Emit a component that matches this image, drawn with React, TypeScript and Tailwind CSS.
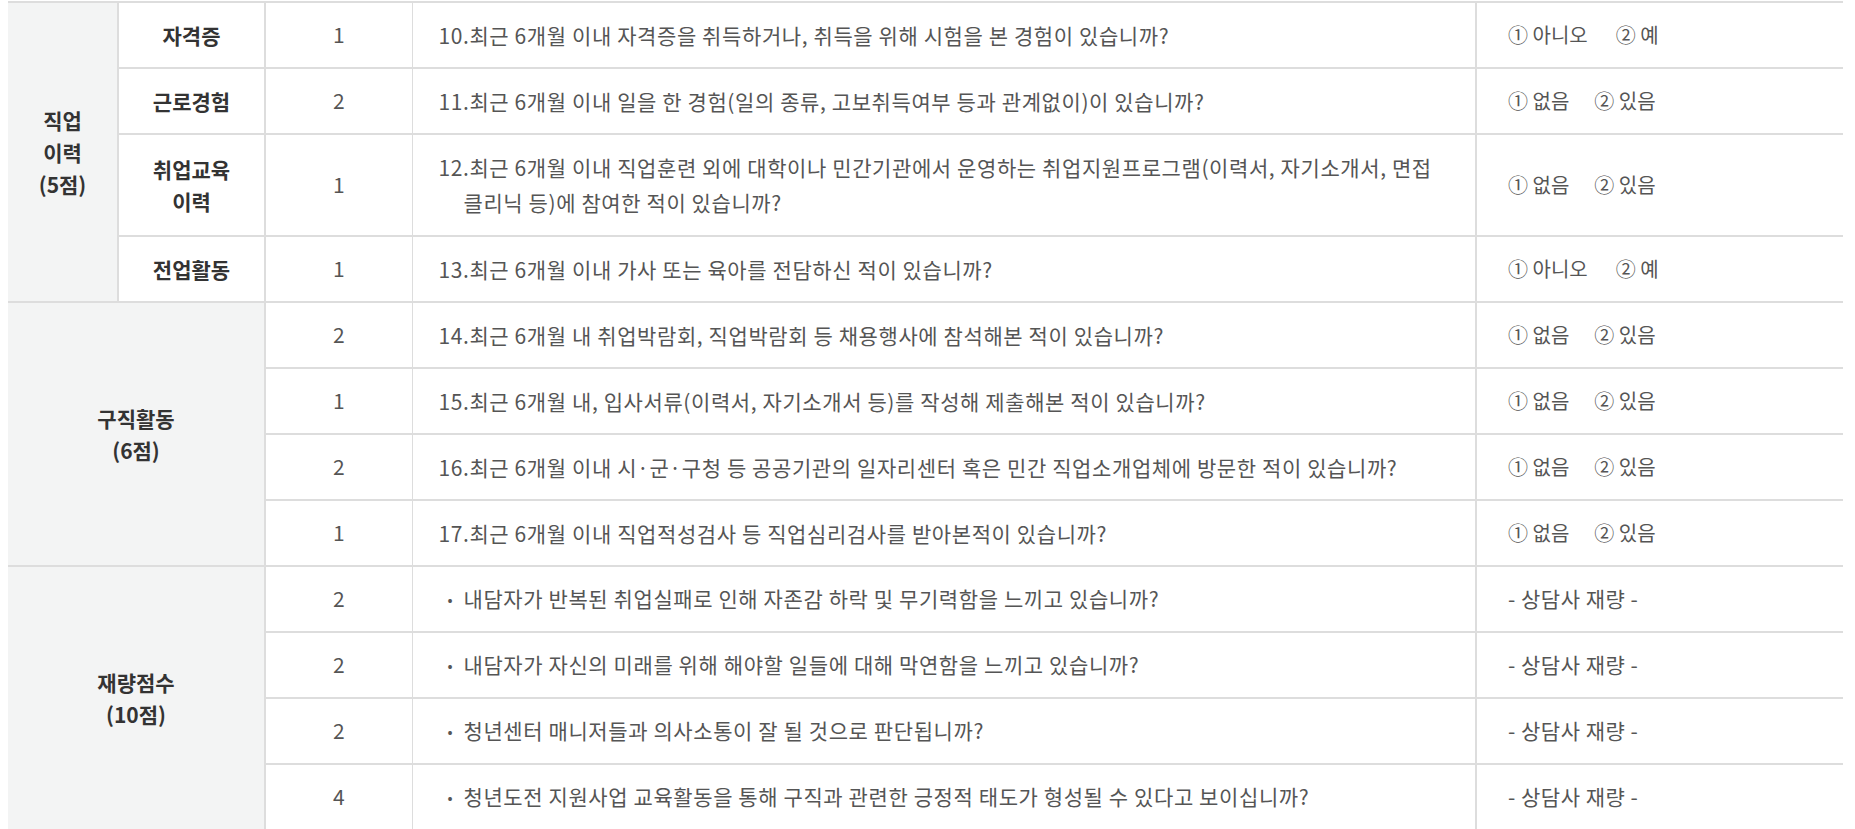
import React from "react";

type Row = {
  score: number;
  text: React.ReactNode;
  answer: "yn" | "has" | "judge";
  bullet?: boolean;
  tall?: boolean;
};

const font = { fontFamily: '"Noto Sans CJK KR", "Noto Sans", sans-serif' };

function Answer({ kind }: { kind: Row["answer"] }) {
  if (kind === "judge") {
    return <span className="text-[21px] tracking-[0.5px]">- 상담사 재량 -</span>;
  }
  return (
    <div className={`flex text-[20px] ${kind === "yn" ? "gap-[28px]" : "gap-[25px]"}`}>
      <span>① {kind === "yn" ? "아니오" : "없음"}</span>
      <span>② {kind === "yn" ? "예" : "있음"}</span>
    </div>
  );
}

function Question({ row }: { row: Row }) {
  if (row.bullet) {
    return (
      <div className="flex items-center">
        <span className="w-[25px] shrink-0 pl-[9px] text-[15px]">•</span>
        <span>{row.text}</span>
      </div>
    );
  }
  return <p className="pl-[25px] indent-[-25px] leading-[35px]">{row.text}</p>;
}

const career: (Row & { label: React.ReactNode })[] = [
  { label: "자격증", score: 1, answer: "yn", text: "10.최근 6개월 이내 자격증을 취득하거나, 취득을 위해 시험을 본 경험이 있습니까?" },
  { label: "근로경험", score: 2, answer: "has", text: "11.최근 6개월 이내 일을 한 경험(일의 종류, 고보취득여부 등과 관계없이)이 있습니까?" },
  {
    label: (
      <>
        취업교육
        <br />
        이력
      </>
    ),
    score: 1,
    answer: "has",
    tall: true,
    text: (
      <>
        12.최근 6개월 이내 직업훈련 외에 대학이나 민간기관에서 운영하는 취업지원프로그램(이력서, 자기소개서, 면접
        <br />
        클리닉 등)에 참여한 적이 있습니까?
      </>
    ),
  },
  { label: "전업활동", score: 1, answer: "yn", text: "13.최근 6개월 이내 가사 또는 육아를 전담하신 적이 있습니까?" },
];

const search: Row[] = [
  { score: 2, answer: "has", text: "14.최근 6개월 내 취업박람회, 직업박람회 등 채용행사에 참석해본 적이 있습니까?" },
  { score: 1, answer: "has", text: "15.최근 6개월 내, 입사서류(이력서, 자기소개서 등)를 작성해 제출해본 적이 있습니까?" },
  { score: 2, answer: "has", text: "16.최근 6개월 이내 시·군·구청 등 공공기관의 일자리센터 혹은 민간 직업소개업체에 방문한 적이 있습니까?" },
  { score: 1, answer: "has", text: "17.최근 6개월 이내 직업적성검사 등 직업심리검사를 받아본적이 있습니까?" },
];

const judge: Row[] = [
  { score: 2, answer: "judge", bullet: true, text: "내담자가 반복된 취업실패로 인해 자존감 하락 및 무기력함을 느끼고 있습니까?" },
  { score: 2, answer: "judge", bullet: true, text: "내담자가 자신의 미래를 위해 해야할 일들에 대해 막연함을 느끼고 있습니까?" },
  { score: 2, answer: "judge", bullet: true, text: "청년센터 매니저들과 의사소통이 잘 될 것으로 판단됩니까?" },
  { score: 4, answer: "judge", bullet: true, text: "청년도전 지원사업 교육활동을 통해 구직과 관련한 긍정적 태도가 형성될 수 있다고 보이십니까?" },
];

const cell = "border-b-2 border-[#dddddd]";
const head = `${cell} bg-[#f3f4f4] text-center font-bold text-[21px] text-[#333333] leading-[32px] border-r-2`;
const scoreCls = `${cell} border-r text-center text-[21px]`;
const qCls = `${cell} border-r-2 pl-[26px] pr-4 text-left text-[21px] tracking-[0.6px]`;
const aCls = `${cell} pl-[31px] text-left`;

function Cells({ row }: { row: Row }) {
  return (
    <>
      <td className={scoreCls}>{row.score}</td>
      <td className={qCls}>
        <Question row={row} />
      </td>
      <td className={aCls}>
        <Answer kind={row.answer} />
      </td>
    </>
  );
}

export default function App() {
  return (
    <div className="min-h-screen bg-white pt-px pl-2 pr-3" style={font}>
      <table className="w-[1835px] table-fixed border-collapse border-t-2 border-[#dddddd] text-[18px] text-[#555555]">
        <colgroup>
          <col className="w-[110px]" />
          <col className="w-[147px]" />
          <col className="w-[147px]" />
          <col className="w-[1064px]" />
          <col />
        </colgroup>
        <tbody>
          {career.map((row, i) => (
            <tr key={i} className={row.tall ? "h-[102px]" : "h-[66px]"}>
              {i === 0 && (
                <td rowSpan={4} className={head}>
                  직업
                  <br />
                  이력
                  <br />
                  (5점)
                </td>
              )}
              <td className={`${head} bg-white`}>{row.label}</td>
              <Cells row={row} />
            </tr>
          ))}
          {search.map((row, i) => (
            <tr key={i} className="h-[66px]">
              {i === 0 && (
                <td rowSpan={4} colSpan={2} className={head}>
                  구직활동
                  <br />
                  (6점)
                </td>
              )}
              <Cells row={row} />
            </tr>
          ))}
          {judge.map((row, i) => (
            <tr key={i} className="h-[66px]">
              {i === 0 && (
                <td rowSpan={4} colSpan={2} className={head}>
                  재량점수
                  <br />
                  (10점)
                </td>
              )}
              <Cells row={row} />
            </tr>
          ))}
        </tbody>
      </table>
    </div>
  );
}
